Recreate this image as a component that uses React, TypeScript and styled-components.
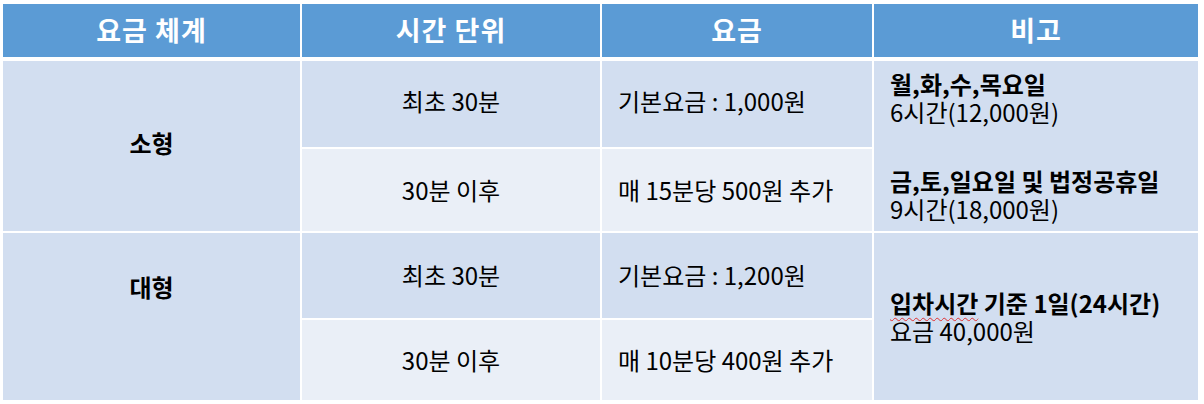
import React from 'react';
import styled, { createGlobalStyle } from 'styled-components';

const GlobalStyle = createGlobalStyle`
  html, body { margin: 0; padding: 0; background: #ffffff; }
  body { font-family: "Noto Sans CJK KR", "Noto Sans", sans-serif; color: #000; }
`;

const Page = styled.div`
  padding: 4px 0 0 3px;
`;

const Table = styled.div`
  display: grid;
  grid-template-columns: 297px 298px 270px 324px;
  grid-template-rows: 55px 86px 82px 85px 80px;
  column-gap: 2px;
  row-gap: 2px;
  width: 1195px;
  background: #ffffff;
`;

const HeaderCell = styled.div`
  background: #5b9bd5;
  color: #ffffff;
  font-weight: 700;
  font-size: 27px;
  line-height: 1.2;
  margin-bottom: 2px;
  display: flex;
  align-items: center;
  justify-content: center;
  letter-spacing: 1px;
`;

const Cell = styled.div<{ $light?: boolean; $span?: number; $align?: 'center' | 'left'; $bold?: boolean; $lift?: number }>`
  background: ${p => (p.$light ? '#eaeff7' : '#d2def0')};
  grid-row: ${p => (p.$span ? `span ${p.$span}` : 'auto')};
  display: flex;
  flex-direction: column;
  align-items: ${p => (p.$align === 'left' ? 'flex-start' : 'center')};
  justify-content: center;
  padding: 0 ${p => (p.$align === 'left' ? '16px' : '0')} ${p => p.$lift ?? 0}px;
  font-size: 24px;
  line-height: 1.2;
  font-weight: ${p => (p.$bold ? 700 : 400)};
  box-sizing: border-box;
  white-space: nowrap;
`;

const Note = styled.div`
  display: flex;
  flex-direction: column;
  gap: 41px;
`;

const Para = styled.div`
  display: flex;
  flex-direction: column;
  line-height: 28px;
`;

const Line = styled.div<{ $bold?: boolean }>`
  font-weight: ${p => (p.$bold ? 700 : 400)};
  line-height: 28px;
`;

const Misspelled = styled.span`
  text-decoration: underline wavy #e03030;
  text-decoration-thickness: 1px;
  text-underline-offset: 4px;
`;

export default function App() {
  return (
    <Page>
      <GlobalStyle />
      <Table>
        <HeaderCell>요금 체계</HeaderCell>
        <HeaderCell>시간 단위</HeaderCell>
        <HeaderCell>요금</HeaderCell>
        <HeaderCell>비고</HeaderCell>

        <Cell $span={2} $bold $lift={6}>소형</Cell>
        <Cell $lift={6}>최초 30분</Cell>
        <Cell $align="left" $lift={6}>기본요금 : 1,000원</Cell>
        <Cell $span={2} $align="left">
          <Note>
            <Para>
              <Line $bold>월,화,수,목요일</Line>
              <Line>6시간(12,000원)</Line>
            </Para>
            <Para>
              <Line $bold>금,토,일요일 및 법정공휴일</Line>
              <Line>9시간(18,000원)</Line>
            </Para>
          </Note>
        </Cell>
        <Cell $light>30분 이후</Cell>
        <Cell $light $align="left">매 15분당 500원 추가</Cell>

        <Cell $span={2} $bold $lift={58}>대형</Cell>
        <Cell>최초 30분</Cell>
        <Cell $align="left">기본요금 : 1,200원</Cell>
        <Cell $span={2} $align="left">
          <Para>
            <Line $bold><Misspelled>입차시간</Misspelled> 기준 1일(24시간)</Line>
            <Line>요금 40,000원</Line>
          </Para>
        </Cell>
        <Cell $light>30분 이후</Cell>
        <Cell $light $align="left">매 10분당 400원 추가</Cell>
      </Table>
    </Page>
  );
}
